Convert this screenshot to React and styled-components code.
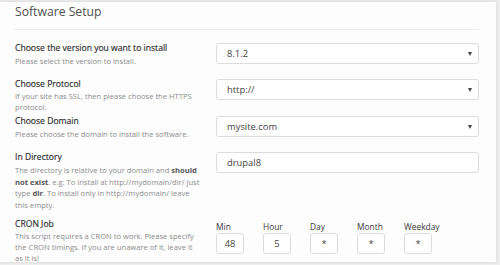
import React from "react";
import styled, { createGlobalStyle } from "styled-components";

const GlobalStyle = createGlobalStyle`
    html, body {
        margin: 0;
        padding: 0;
        background-color: #eeeeee;
        font-family: "Open Sans", "Noto Sans", sans-serif;
    }
`;

const Page = styled.div`
    width: 500px;
    height: 265px;
    padding-top: 2px;
    box-sizing: border-box;
    overflow: hidden;
`;

const Panel = styled.div`
    width: 496px;
    height: 260px;
    background-color: #fdfdfd;
    box-shadow: 0px 0px 3px rgba(0, 0, 0, 0.12);
    padding: 0 17px 0 15px;
    box-sizing: border-box;
`;

const Title = styled.h2`
    margin: 0;
    padding-top: 1px;
    height: 26px;
    line-height: 17px;
    font-size: 12.2px;
    font-weight: 400;
    color: #505050;
    border-bottom: 1px solid #ececec;
`;

const Rows = styled.div`
    padding-top: 13px;
`;

const Row = styled.div`
    display: grid;
    grid-template-columns: 186px 1fr;
    column-gap: 15px;
    min-height: ${(p) => p.$height || 36}px;
    margin-top: ${(p) => p.$offset || 0}px;
`;

const Info = styled.div`
    display: flex;
    flex-direction: column;
`;

const Label = styled.div`
    font-size: 8.6px;
    font-weight: 400;
    line-height: 11px;
    color: #2a2a2a;
    -webkit-text-stroke: 0.15px #2a2a2a;
`;

const Hint = styled.div`
    margin-top: ${(p) => (p.$tight ? 1 : 2)}px;
    font-size: 7.6px;
    line-height: ${(p) => (p.$tight ? 11 : 11.6)}px;
    color: #8c8c8c;

    b {
        font-weight: 700;
        color: #555;
    }
`;

const SelectBox = styled.div`
    position: relative;
    height: 21px;
    box-sizing: border-box;
    border: 1px solid #dcdcdc;
    border-radius: 3px;
    background-color: #fff;
    padding-left: 10px;
    display: flex;
    align-items: center;
    font-size: 9.4px;
    color: #444;

    &::after {
        content: "";
        position: absolute;
        right: 6px;
        top: 8px;
        border-left: 2.5px solid transparent;
        border-right: 2.5px solid transparent;
        border-top: 4px solid #444;
    }
`;

const TextBox = styled.input`
    height: 21px;
    width: ${(p) => (p.$small ? "28px" : "100%")};
    box-sizing: border-box;
    border: 1px solid #dcdcdc;
    border-radius: 3px;
    background-color: #fff;
    padding: 0 ${(p) => (p.$small ? "0" : "10px")};
    text-align: ${(p) => (p.$small ? "center" : "left")};
    font-family: inherit;
    font-size: 9.4px;
    color: #444;
    outline: none;
`;

const CronFields = styled.div`
    display: flex;
    padding-top: 2px;
`;

const CronField = styled.div`
    width: 47px;
    display: flex;
    flex-direction: column;
    gap: 1px;
`;

const CronLabel = styled.label`
    font-size: 8.4px;
    line-height: 11px;
    color: #3a3a3a;
`;

const cronFields = [
    { label: "Min", value: "48" },
    { label: "Hour", value: "5" },
    { label: "Day", value: "*" },
    { label: "Month", value: "*" },
    { label: "Weekday", value: "*" },
];

const App = () => {
    return (
        <Page>
            <GlobalStyle />
            <Panel>
                <Title>Software Setup</Title>
                <Rows>
                    <Row>
                        <Info>
                            <Label>Choose the version you want to install</Label>
                            <Hint>Please select the version to install.</Hint>
                        </Info>
                        <SelectBox>8.1.2</SelectBox>
                    </Row>
                    <Row $height={37}>
                        <Info>
                            <Label>Choose Protocol</Label>
                            <Hint $tight>
                                If your site has SSL, then please choose the HTTPS protocol.
                            </Hint>
                        </Info>
                        <SelectBox>http://</SelectBox>
                    </Row>
                    <Row>
                        <Info>
                            <Label>Choose Domain</Label>
                            <Hint>Please choose the domain to install the software.</Hint>
                        </Info>
                        <SelectBox>mysite.com</SelectBox>
                    </Row>
                    <Row>
                        <Info>
                            <Label>In Directory</Label>
                            <Hint>
                                The directory is relative to your domain and <b>should</b> <b>not exist</b>. e.g. To install at http://mydomain/dir/ just type <b>dir</b>. To install only in http://mydomain/ leave this empty.
                            </Hint>
                        </Info>
                        <TextBox defaultValue="drupal8" />
                    </Row>
                    <Row $offset={8}>
                        <Info>
                            <Label>CRON Job</Label>
                            <Hint $tight>
                                This script requires a CRON to work. Please specify the CRON timings. If you are unaware of it, leave it as it is!
                            </Hint>
                        </Info>
                        <CronFields>
                            {cronFields.map((f) => (
                                <CronField key={f.label}>
                                    <CronLabel>{f.label}</CronLabel>
                                    <TextBox $small defaultValue={f.value} />
                                </CronField>
                            ))}
                        </CronFields>
                    </Row>
                </Rows>
            </Panel>
        </Page>
    );
};

export default App;
